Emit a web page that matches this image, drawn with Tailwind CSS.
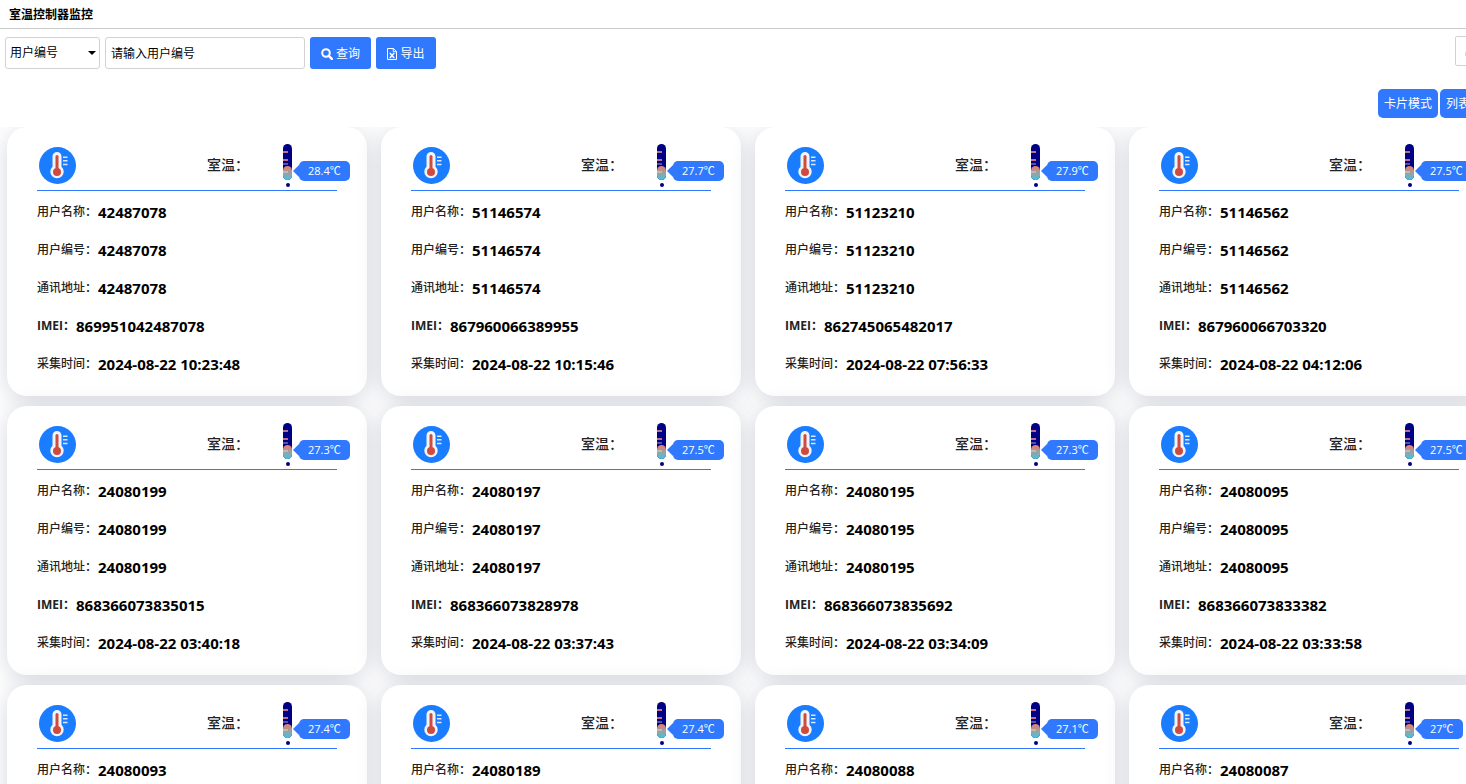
<!DOCTYPE html>
<html lang="zh-CN">
<head>
  <meta charset="UTF-8" />
  <meta name="viewport" content="width=device-width, initial-scale=1.0" />
  <title>室温控制器监控</title>
  <script src="https://cdn.jsdelivr.net/npm/@tailwindcss/browser@4"></script>
</head>
<body class="bg-white text-black text-xs overflow-hidden h-screen font-['Open_Sans','Noto_Sans_CJK_SC',sans-serif]">
  <header class="h-[29px] border-b border-[#ccc] px-[9px] pt-px flex items-center">
    <h1 class="text-xs font-bold">室温控制器监控</h1>
  </header>

  <main class="min-w-[1503px]">
    <!-- 查询条件 -->
    <form class="flex items-start gap-[5px] pt-2 pl-[5px] pr-4" onsubmit="return false">
      <div class="relative">
        <select id="field" aria-label="查询字段" class="appearance-none w-[95px] h-8 pl-1 border border-[#d2d2d2] rounded-[3px] bg-white text-xs">
          <option>用户编号</option>
          <option>用户名称</option>
        </select>
        <svg class="absolute right-1 top-[14px] pointer-events-none" width="8" height="4" viewBox="0 0 8 4"><path d="M0 0h8L4 4z" /></svg>
      </div>
      <input id="keyword" type="text" aria-label="用户编号" placeholder="请输入用户编号" class="w-[200px] h-8 px-[5px] pt-px border border-[#d2d2d2] rounded-[3px] text-xs placeholder:text-black" />
      <button id="search-btn" class="flex items-center justify-center gap-[3px] w-[61px] h-8 pt-[2px] rounded-[3px] bg-[#3079ff] text-white">
        <svg width="12" height="12" viewBox="0 0 12 12" fill="none" stroke="currentColor" stroke-width="2"><circle cx="5" cy="5" r="3.8" /><path d="M7.8 7.8l3 3" stroke-width="2.4" stroke-linecap="round" /></svg>
        <span>查询</span>
      </button>
      <button id="export-btn" class="flex items-center justify-center gap-[3px] w-[60px] h-8 pt-[2px] rounded-[3px] bg-[#3079ff] text-white">
        <svg width="10" height="12" viewBox="0 0 10 12" fill="none" stroke="currentColor"><path d="M.5.5h6l3 3v8h-9z" /><path d="M6.3.5v3.2h3.2" /><path d="M3 5.3l4 4.4M7 5.3L3 9.7" stroke-width="1.3" /><path d="M2.3 5.3h2M5.8 5.3h2M2.3 9.7h2M5.8 9.7h2" stroke-width=".7" /></svg>
        <span>导出</span>
      </button>
      <button id="filter-btn" aria-label="设置" class="ml-auto -mt-px w-8 h-[30px] flex items-center justify-center border border-[#d2d2d2] rounded-[2px]">
        <svg width="12" height="12" viewBox="0 0 12 12" fill="#f5d98a"><path d="M0 7h3v4H0zM5 4h3v7H5zM9 1h3v10H9z" /></svg>
      </button>
    </form>

    <div class="flex justify-end gap-[2px] pr-[3px] mt-5 mb-[9px]">
      <button class="w-[60px] h-[29px] pt-px rounded-[5px] bg-[#3079ff] text-white">卡片模式</button>
      <button class="w-[60px] h-[29px] pt-px rounded-[5px] bg-[#3079ff] text-white">列表模式</button>
    </div>

    <!-- 卡片列表 -->
    <div class="overflow-hidden">
      <div id="card-list" class="grid grid-cols-[repeat(4,360px)] gap-x-[14px] gap-y-[10px] px-[7px] pb-10"></div>
    </div>
  </main>

  <script>
    const rows = [
      ['28.4', '42487078', '869951042487078', '2024-08-22 10:23:48'],
      ['27.7', '51146574', '867960066389955', '2024-08-22 10:15:46'],
      ['27.9', '51123210', '862745065482017', '2024-08-22 07:56:33'],
      ['27.5', '51146562', '867960066703320', '2024-08-22 04:12:06'],
      ['27.3', '24080199', '868366073835015', '2024-08-22 03:40:18'],
      ['27.5', '24080197', '868366073828978', '2024-08-22 03:37:43'],
      ['27.3', '24080195', '868366073835692', '2024-08-22 03:34:09'],
      ['27.5', '24080095', '868366073833382', '2024-08-22 03:33:58'],
      ['27.4', '24080093', '', ''],
      ['27.4', '24080189', '', ''],
      ['27.1', '24080088', '', ''],
      ['27', '24080087', '', '']
    ];

    const item = (label, value, weight = 'font-medium') => `
      <div class="flex items-center h-[38px]">
        <dt class="text-xs ${weight} text-[#222] mr-[1px]">${label}：</dt>
        <dd class="text-[15px] font-bold">${value}</dd>
      </div>`;

    document.getElementById('card-list').innerHTML = rows.map(([temp, id, imei, time]) => `
      <article class="h-[269px] px-[30px] rounded-[20px] bg-white shadow-[0_4px_24px_rgba(30,45,80,0.19)]">
        <div class="flex items-start h-16 border-b border-[#3079ff] pl-[2px]">
          <svg class="mt-5 shrink-0" width="37" height="37" viewBox="0 0 37 37">
            <circle cx="18.5" cy="18.5" r="18.5" fill="#1a7dff" />
            <path d="M13.500 9.500a4.500 4.500 0 0 1 9 0v10.200a6.700 6.700 0 1 1-9 0z" fill="#f3f4f6" />
            <circle cx="18" cy="25" r="4" fill="#cf4a3f" />
            <path d="M18 9.5V24" stroke="#cf4a3f" stroke-width="3" stroke-linecap="round" />
            <path d="M24 10.2h4.5M24 13.8h4.5M24 17.4h4.5" stroke="#dce8fa" stroke-width="1.5" />
          </svg>
          <span class="ml-[131px] mt-7 w-[76px] text-sm leading-5 font-medium text-[#222] shrink-0">室温：</span>
          <svg class="mt-[17px] shrink-0" width="9" height="44" viewBox="0 0 9 44">
            <defs>
              <linearGradient id="mercury-${id}" x1="0" y1="0" x2="0" y2="1">
                <stop offset="0" stop-color="#ef7c68" />
                <stop offset="1" stop-color="#41c5e0" />
              </linearGradient>
            </defs>
            <rect width="9" height="36" rx="4.5" fill="#000084" />
            <rect y="22" width="9" height="14" rx="4.5" fill="url(#mercury-${id})" />
            <path d="M0 8h5M0 16h5" stroke="#c26c90" stroke-width="2" />
            <path d="M0 20h5" stroke="#5552a0" stroke-width="2" />
            <path d="M0 28h5" stroke="#c2b8b5" stroke-width="2" />
            <circle cx="5" cy="41" r="2" fill="#000084" />
          </svg>
          <div class="flex items-center mt-[34px] ml-[1px] shrink-0">
            <svg width="6" height="12" viewBox="0 0 6 12"><path d="M6 0v12L0 6z" fill="#3079ff" /></svg>
            <span class="h-5 px-[9px] rounded-[5px] bg-[#3079ff] text-white text-[11px] leading-5">${temp}℃</span>
          </div>
        </div>
        <dl class="pt-[2px]">
          ${item('用户名称', id)}
          ${item('用户编号', id)}
          ${item('通讯地址', id)}
          ${item('IMEI', imei, 'font-bold')}
          ${item('采集时间', time)}
        </dl>
      </article>`).join('');
  </script>
</body>
</html>
